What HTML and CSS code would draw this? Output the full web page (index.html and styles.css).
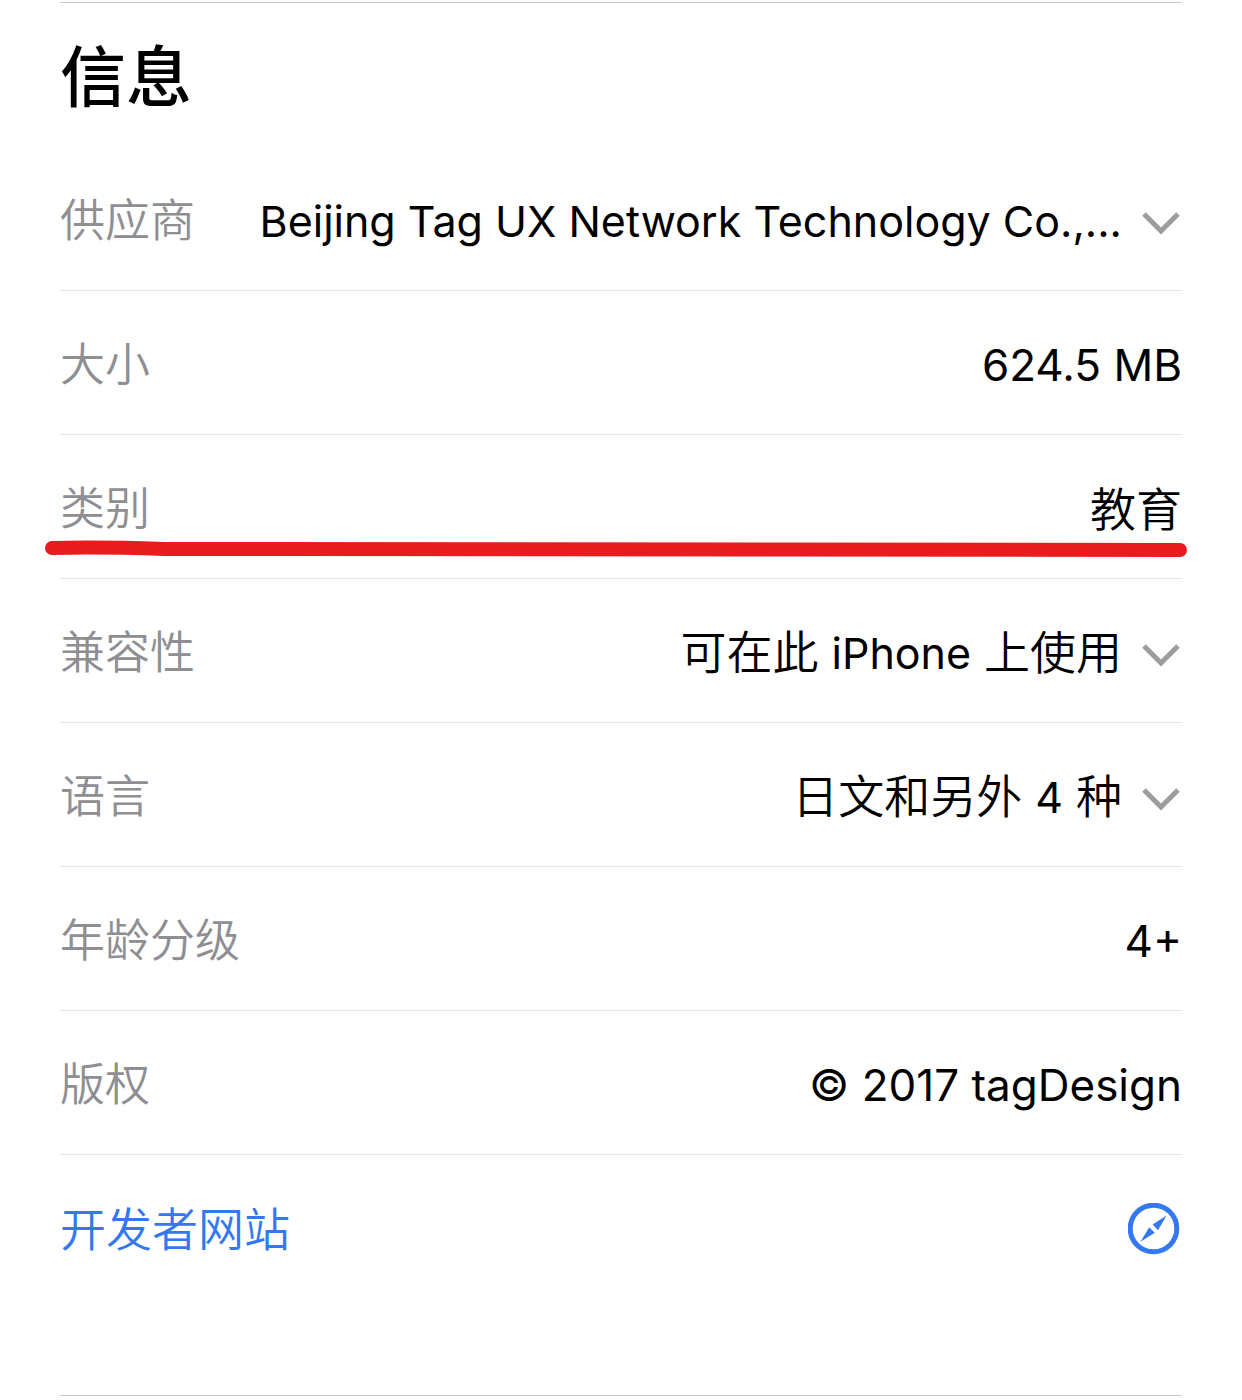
FILE: index.html
```html
<!DOCTYPE html>
<html lang="zh-CN">
<head>
<meta charset="utf-8">
<meta name="viewport" content="width=device-width, initial-scale=1">
<title>信息</title>
<link rel="stylesheet" href="styles.css">
</head>
<body>
<main class="info">
  <h1 class="title">信息</h1>
  <dl class="list">
    <div class="row">
      <dt class="label">供应商</dt>
      <dd class="value"><span class="latin">Beijing Tag UX Network Technology Co.,...</span><button class="toggle" type="button" aria-label="展开供应商"><svg class="chevron" viewBox="0 0 40 26"><path d="M2 4 19 21 36 4"/></svg></button></dd>
    </div>
    <div class="row">
      <dt class="label">大小</dt>
      <dd class="value"><span class="latin plain">624.5 MB</span></dd>
    </div>
    <div class="row">
      <dt class="label">类别</dt>
      <dd class="value">教育</dd>
      <svg class="stroke" viewBox="0 0 1144 18" preserveAspectRatio="none" aria-hidden="true"><path d="M8 8C50 7 90 8 120 9Q500 9 1136 10"/></svg>
    </div>
    <div class="row">
      <dt class="label">兼容性</dt>
      <dd class="value"><span>可在此 <span class="latin">iPhone</span> 上使用</span><button class="toggle" type="button" aria-label="展开兼容性"><svg class="chevron" viewBox="0 0 40 26"><path d="M2 4 19 21 36 4"/></svg></button></dd>
    </div>
    <div class="row">
      <dt class="label">语言</dt>
      <dd class="value"><span>日文和另外 <span class="latin">4</span> 种</span><button class="toggle" type="button" aria-label="展开语言"><svg class="chevron" viewBox="0 0 40 26"><path d="M2 4 19 21 36 4"/></svg></button></dd>
    </div>
    <div class="row">
      <dt class="label">年龄分级</dt>
      <dd class="value"><span class="latin plain">4+</span></dd>
    </div>
    <div class="row">
      <dt class="label">版权</dt>
      <dd class="value"><span class="latin plain">© 2017 tagDesign</span></dd>
    </div>
  </dl>
  <a class="row site" href="#">开发者网站<svg class="compass" viewBox="0 0 52 52" aria-hidden="true"><circle cx="25.500" cy="25.500" r="23.300"/><path d="M38.500 12.500 24.700 21.500 30 27.200ZM12.500 38.800 21.200 24.300 26.800 29.800Z"/></svg></a>
</main>
</body>
</html>
```

FILE: styles.css
```css
* { box-sizing: border-box; }
body {
  margin: 0;
  background: #fff;
  color: #000;
  font-family: Inter, "Noto Sans CJK SC", sans-serif;
  font-size: 46px;
  font-weight: 350;
  line-height: 64px;
}
.info {
  margin: 2px 60px 4px;
  border-top: 1px solid #c8c8cc;
  border-bottom: 1px solid #c8c8cc;
  padding-bottom: 96px;
}
.title {
  margin: 0;
  padding: 24px 0 20px;
  font-size: 66px;
  line-height: 100px;
  font-weight: 500;
}
.list { margin: 0; }
.row {
  position: relative;
  display: flex;
  align-items: center;
  justify-content: space-between;
  min-height: 144px;
  padding-top: 4px;
  border-bottom: 1px solid #e5e5e8;
}
.label { flex: none; color: #8e8e93; font-size: 45px; }
.value {
  display: flex;
  align-items: center;
  gap: 20px;
  min-width: 0;
  margin: 0;
  white-space: nowrap;
}
.latin { font-size: 43px; font-weight: 400; }
.plain { font-size: 44px; }
.toggle {
  display: flex;
  padding: 4px 0 0;
  border: 0;
  background: none;
}
.chevron {
  width: 40px;
  height: 26px;
  fill: none;
  stroke: #9c9c9c;
  stroke-width: 5;
}
.stroke {
  position: absolute;
  left: -16px;
  top: 105px;
  width: calc(100% + 22px);
  height: 18px;
  fill: none;
  stroke: #e81c1e;
  stroke-width: 14;
  stroke-linecap: round;
}
.site {
  border-bottom: 0;
  color: #3478f0;
  text-decoration: none;
}
.compass {
  width: 52px;
  height: 52px;
  margin-right: 2px;
  fill: none;
  stroke: currentColor;
  stroke-width: 5;
}
.compass path { fill: currentColor; stroke: none; }
```
